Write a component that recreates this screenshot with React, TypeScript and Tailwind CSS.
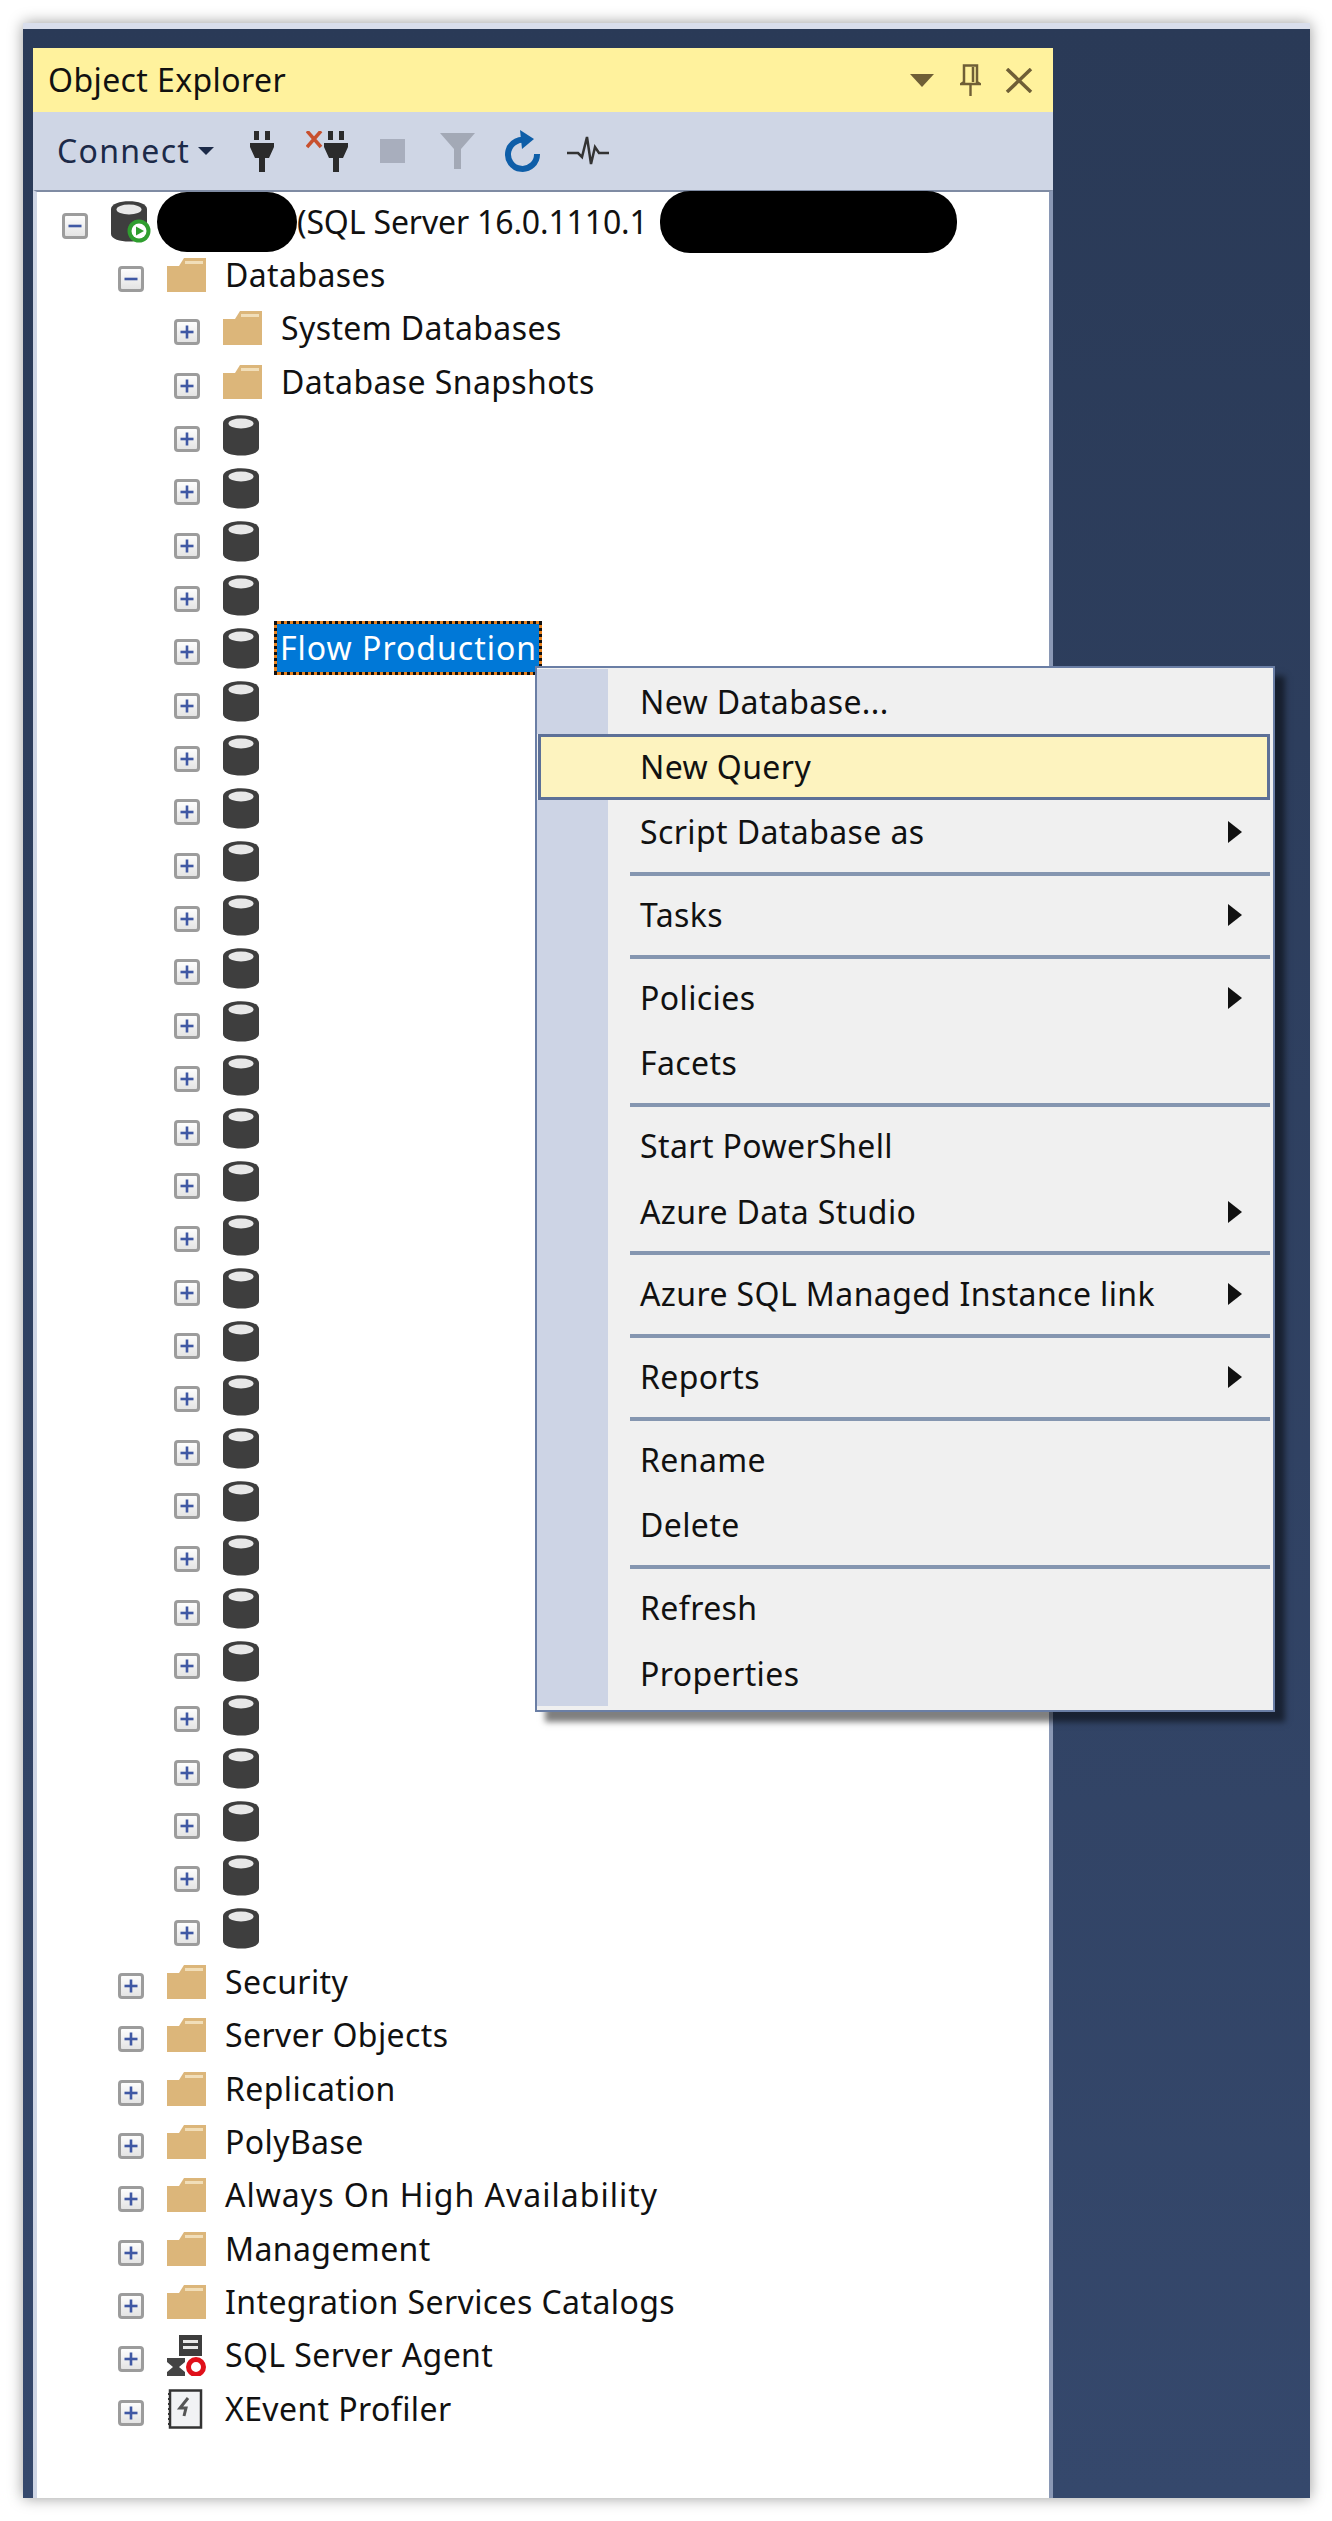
import React from "react";

const font = "font-['Noto_Sans','Open_Sans',sans-serif]";

function Box({ minus }: { minus?: boolean }) {
  return (
    <svg width="26" height="26" viewBox="0 0 26 26" className="shrink-0 mt-[8px]">
      <defs>
        <linearGradient id="bx" x1="0" y1="0" x2="0" y2="1">
          <stop offset="0" stopColor="#ffffff" />
          <stop offset="1" stopColor="#e2e2e2" />
        </linearGradient>
      </defs>
      <rect x="1.5" y="1.5" width="23" height="23" rx="2.5" fill="url(#bx)" stroke="#9c9c9c" strokeWidth="3" />
      <rect x="6.5" y="11.7" width="13" height="2.6" fill="#3f58a4" />
      {!minus && <rect x="11.7" y="6.5" width="2.6" height="13" fill="#3f58a4" />}
    </svg>
  );
}

function Folder() {
  return (
    <svg width="39" height="34" viewBox="0 0 39 34">
      <path d="M0 8 L12 8 L17 0 L39 0 L39 34 L0 34 Z" fill="#dcb67a" />
      <rect x="18" y="3" width="18" height="3" fill="#f1deb9" />
    </svg>
  );
}

function Db({ play }: { play?: boolean }) {
  return (
    <svg width="37" height="41" viewBox="0 0 37 41" className="overflow-visible">
      <path d="M0 8 C0 -2.5 36 -2.5 36 8 L36 33 C36 43 0 43 0 33 Z" fill="#3e3e3e" />
      <ellipse cx="18" cy="8.5" rx="12.5" ry="5" fill="#e8e8e8" />
      {play && (
        <g>
          <circle cx="28" cy="30" r="11.5" fill="#2f9e2f" />
          <circle cx="28" cy="30" r="7.5" fill="#ffffff" />
          <path d="M25 25.5 L33 30 L25 34.5 Z" fill="#2f9e2f" />
        </g>
      )}
    </svg>
  );
}

function Plug({ x }: { x?: boolean }) {
  return (
    <svg width={x ? 42 : 24} height="41" viewBox={x ? "-18 0 42 41" : "0 0 24 41"} className="shrink-0">
      {x && <path d="M-17 0 L-3 16 M-3 0 L-17 16" stroke="#c8502e" strokeWidth="3.5" />}
      <rect x="4" y="0" width="5" height="9" fill="#2b2b2b" />
      <rect x="15" y="0" width="5" height="9" fill="#2b2b2b" />
      <path d="M0 12 L24 12 L24 16 L19 27 L15 27 L15 41 L9 41 L9 27 L5 27 L0 16 Z" fill="#2b2b2b" />
    </svg>
  );
}

const Row = ({ level, minus, icon, slot, children }: { level: 0 | 1 | 2; minus?: boolean; icon: React.ReactNode; slot?: "db"; children?: React.ReactNode }) => (
  <div
    className={`flex h-[53.35px] items-center ${level === 0 ? "pl-[25px]" : level === 1 ? "pl-[81px]" : "pl-[137px]"}`}
  >
    <Box minus={minus} />
    <div className={`ml-[23px] flex shrink-0 items-center ${slot === "db" ? "w-[51px]" : "w-[58px]"}`}>{icon}</div>
    {children}
  </div>
);

const Label = ({ children, className = "tracking-[0.4px]" }: { children: React.ReactNode; className?: string }) => (
  <span className={`whitespace-nowrap text-[32px] leading-[40px] text-[#111] ${className}`}>{children}</span>
);

function Agent() {
  return (
    <svg width="39" height="41" viewBox="0 0 39 41">
      <rect x="12" y="0" width="23" height="21" fill="#3d3d3d" />
      <rect x="16" y="5" width="15" height="3" fill="#e8e8e8" />
      <rect x="16" y="11" width="15" height="3" fill="#e8e8e8" />
      <path d="M0 23 L18 23 L18 27 L12 32 L18 37 L18 41 L0 41 L0 37 L6 32 L0 27 Z" fill="#444" />
      <circle cx="29" cy="32" r="7.5" fill="#fff" stroke="#e0101a" strokeWidth="5" />
    </svg>
  );
}

function XEvent() {
  return (
    <svg width="36" height="40" viewBox="0 0 36 40">
      <rect x="3" y="1.5" width="31" height="37" fill="#f1f2f4" stroke="#333" strokeWidth="2.5" />
      <path d="M1 5 h3 M1 10 h3 M1 15 h3 M1 20 h3 M1 25 h3 M1 30 h3 M1 35 h3" stroke="#333" strokeWidth="2" />
      <path d="M21 9 L13 19 L19 19 L17 27" fill="none" stroke="#555" strokeWidth="3" />
    </svg>
  );
}

const Item = ({ text, arrow }: { text: string; arrow?: boolean }) => (
  <div className="flex h-[65.3px]">
    <div className="w-[71px] shrink-0 bg-[#cdd4e5]" />
    <div className="flex flex-1 items-center justify-between pl-[32px] pr-[31px]">
      <Label>{text}</Label>
      {arrow && (
        <svg width="14" height="22" viewBox="0 0 14 22" className="shrink-0">
          <path d="M0 0 L14 11 L0 22 Z" fill="#111" />
        </svg>
      )}
    </div>
  </div>
);

const ActiveItem = ({ text }: { text: string }) => (
  <div className="mr-[3px] ml-[1px] flex h-[65.3px] items-center border-[3px] border-[#5d7097] bg-[#fdf3bf] pl-[99px]">
    <Label>{text}</Label>
  </div>
);

const Sep = () => (
  <div className="flex h-[17.6px]">
    <div className="w-[71px] shrink-0 bg-[#cdd4e5]" />
    <div className="flex flex-1 items-center pl-[22px] pr-[3px]">
      <div className="h-[4px] w-full bg-[#8596b0]" />
    </div>
  </div>
);

export default function App() {
  const dbs = Array.from({ length: 29 }, (_, i) => i);
  const rootFolders = ["Security", "Server Objects", "Replication", "PolyBase", "Always On High Availability", "Management", "Integration Services Catalogs"];
  return (
    <div className={`relative h-[2521px] w-[1332px] overflow-hidden bg-white pl-[23px] pt-[23px] ${font}`}>
      <div className="h-[2475px] w-[1287px] border-t-[6px] border-[#d9deec] bg-gradient-to-b from-[#2a3a57] to-[#35486c] pl-[10px] pt-[19px] shadow-[0_0_14px_rgba(0,0,0,0.4)]">
        <div className="flex h-[2450px] w-[1020px] flex-col">
          <div className="flex h-[64px] shrink-0 items-center justify-between bg-[#fff29d] pl-[15px] pr-[20px]">
            <Label>Object Explorer</Label>
            <div className="flex items-center">
              <svg width="24" height="13" viewBox="0 0 24 13" className="mr-[26px]">
                <path d="M0 0 L24 0 L12 13 Z" fill="#6f5f36" />
              </svg>
              <svg width="21" height="32" viewBox="0 0 21 32" className="mr-[24px]">
                <path d="M4 1.5 L17 1.5 L17 18 L20 20 L1 20 L4 18 Z M13 3 L13 18" fill="none" stroke="#6f5f36" strokeWidth="2.5" />
                <rect x="9.3" y="20" width="2.4" height="12" fill="#6f5f36" />
              </svg>
              <svg width="28" height="25" viewBox="0 0 28 25">
                <path d="M2 1 L26 24 M26 1 L2 24" stroke="#6f5f36" strokeWidth="3.5" />
              </svg>
            </div>
          </div>
          <div className="flex h-[78px] shrink-0 items-center bg-[#cfd6e5] pl-[24px]">
            <span className="w-[141px] shrink-0 whitespace-nowrap text-[32px] leading-[40px] tracking-[1.3px] text-[#1c2a48]">Connect</span>
            <svg width="16" height="8" viewBox="0 0 16 8" className="shrink-0">
              <path d="M0 0 L16 0 L8 8 Z" fill="#1c2a48" />
            </svg>
            <div className="ml-[36px]"><Plug /></div>
            <div className="ml-[32px]"><Plug x /></div>
            <div className="ml-[32px] h-[24px] w-[25px] shrink-0 bg-[#a8aebd]" />
            <svg width="35" height="36" viewBox="0 0 35 36" className="ml-[35px] shrink-0">
              <path d="M0 0 L35 0 L21 16 L21 36 L14 36 L14 16 Z" fill="#a3a9b6" />
            </svg>
            <svg width="37" height="42" viewBox="0 0 37 42" className="ml-[29px] shrink-0">
              <path d="M24 11 A14.5 14.5 0 1 0 33 24" fill="none" stroke="#0e5ea8" strokeWidth="6" />
              <path d="M16 0 L30 9 L18 19 Z" fill="#0e5ea8" />
            </svg>
            <svg width="42" height="30" viewBox="0 0 42 30" className="ml-[26px] shrink-0">
              <path d="M0 17 L11 17 L15 21 L20 1 L24 28 L28 11 L32 17 L42 17" fill="none" stroke="#333" strokeWidth="2.5" />
            </svg>
          </div>
          <div className="flex-1 border-x-[4px] border-t-[2px] border-x-[#8a98b5] border-t-[#7f8ba3] bg-white pt-[3px] [border-left-color:#cfd6e5]">
            <Row level={0} minus icon={<Db play />}>
              <span className="ml-[128px]"><Label className="tracking-[-0.15px]">(SQL Server 16.0.1110.1</Label></span>
            </Row>
            <Row level={1} minus icon={<Folder />}><Label>Databases</Label></Row>
            <Row level={2} icon={<Folder />}><Label>System Databases</Label></Row>
            <Row level={2} icon={<Folder />}><Label>Database Snapshots</Label></Row>
            {dbs.map((i) => (
              <Row key={i} level={2} slot="db" icon={<Db />}>
                {i === 4 && (
                  <span className="bg-[#e8821e]">
                    <span className="flex h-[54px] w-[268px] items-center whitespace-nowrap border-[3px] border-dotted border-[#111] bg-[#0078d7] bg-clip-padding pl-[3px] text-[32px] leading-[40px] tracking-[1px] text-white">
                      Flow Production
                    </span>
                  </span>
                )}
              </Row>
            ))}
            {rootFolders.map((t) => (
              <Row key={t} level={1} icon={<Folder />}>
                <Label className={t === "Always On High Availability" ? "tracking-[1px]" : "tracking-[0.4px]"}>{t}</Label>
              </Row>
            ))}
            <Row level={1} icon={<Agent />}><Label>SQL Server Agent</Label></Row>
            <Row level={1} icon={<XEvent />}><Label>XEvent Profiler</Label></Row>
          </div>
        </div>
      </div>

      <div className="absolute left-[157px] top-[192px] h-[60px] w-[140px] rounded-[30px] bg-black" />
      <div className="absolute left-[660px] top-[191px] h-[62px] w-[297px] rounded-[30px] bg-black" />

      <div className="absolute left-[535px] top-[666px] h-[1046px] w-[740px] border-2 border-[#6a7ea5] bg-[#f0f0f0] pt-[1px] shadow-[10px_10px_6px_rgba(0,0,0,0.5)]">
        <Item text="New Database..." />
        <ActiveItem text="New Query" />
        <Item text="Script Database as" arrow />
        <Sep />
        <Item text="Tasks" arrow />
        <Sep />
        <Item text="Policies" arrow />
        <Item text="Facets" />
        <Sep />
        <Item text="Start PowerShell" />
        <Item text="Azure Data Studio" arrow />
        <Sep />
        <Item text="Azure SQL Managed Instance link" arrow />
        <Sep />
        <Item text="Reports" arrow />
        <Sep />
        <Item text="Rename" />
        <Item text="Delete" />
        <Sep />
        <Item text="Refresh" />
        <Item text="Properties" />
      </div>
    </div>
  );
}
